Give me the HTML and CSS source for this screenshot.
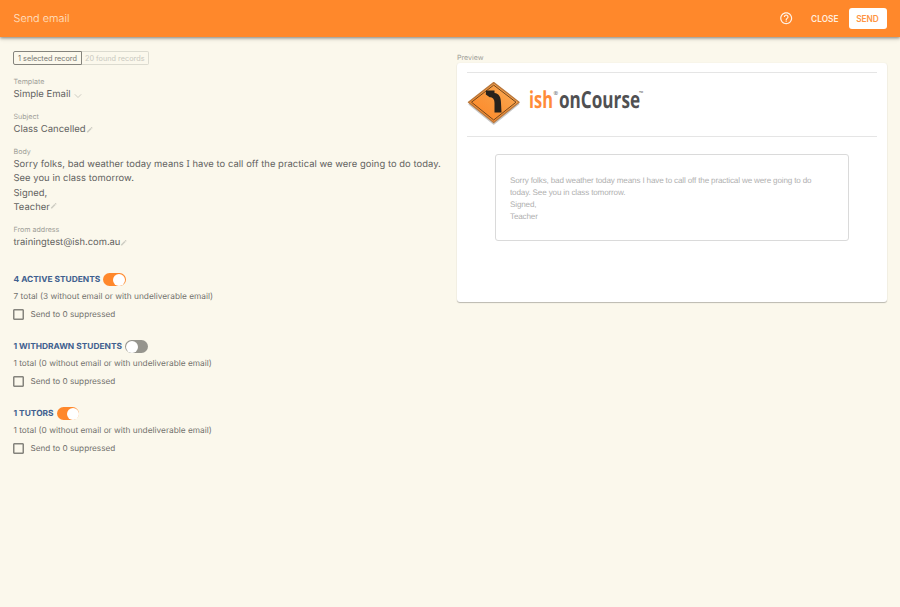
FILE: index.html
```html
<!DOCTYPE html>
<html lang="en">
<head>
<meta charset="utf-8">
<title>Send email</title>
<link rel="stylesheet" href="styles.css">
</head>
<body>
<header class="bar">
  <h1 class="bar-title"><span>Send email</span></h1>
  <svg class="help" viewBox="0 0 24 24"><path d="M11 18h2v-2h-2v2zm1-16C6.48 2 2 6.48 2 12s4.48 10 10 10 10-4.48 10-10S17.520 2 12 2zm0 18c-4.410 0-8-3.590-8-8s3.590-8 8-8 8 3.590 8 8-3.590 8-8 8zm0-14c-2.210 0-4 1.790-4 4h2c0-1.100.9-2 2-2s2 .9 2 2c0 2-3 1.750-3 5h2c0-2.250 3-2.500 3-5 0-2.210-1.790-4-4-4z"/></svg>
  <button class="btn close">CLOSE</button>
  <button class="btn send">SEND</button>
</header>
<main class="content">
  <section class="form">
    <div class="records">
      <button class="rec selected"><span>1 selected record</span></button>
      <button class="rec found"><span>20 found records</span></button>
    </div>
    <div class="field template">
      <div class="label">Template</div>
      <div class="value"><span>Simple Email</span><svg class="chevron" viewBox="0 0 8 6"><path d="M.8 1.300 4 4.500 7.200 1.300"/></svg></div>
    </div>
    <div class="field subject">
      <div class="label">Subject</div>
      <div class="value"><span>Class Cancelled</span><svg class="pencil" viewBox="0 0 24 24"><path d="M3 17.250V21h3.750L17.810 9.940l-3.750-3.750L3 17.250zM20.710 7.040a1 1 0 0 0 0-1.410l-2.340-2.340a1 1 0 0 0-1.410 0l-1.830 1.830 3.750 3.750 1.830-1.830z"/></svg></div>
    </div>
    <div class="field message">
      <div class="label">Body</div>
      <div class="value body-text">Sorry folks, bad weather today means <span class="serif-i">I</span> have to call off the practical we were going to do today.<br>See you in class tomorrow.<br>Signed,<br>Teacher<svg class="pencil" viewBox="0 0 24 24"><path d="M3 17.250V21h3.750L17.810 9.940l-3.750-3.750L3 17.250zM20.710 7.040a1 1 0 0 0 0-1.410l-2.340-2.340a1 1 0 0 0-1.410 0l-1.830 1.830 3.750 3.750 1.830-1.830z"/></svg></div>
    </div>
    <div class="field from">
      <div class="label">From address</div>
      <div class="value"><span>trainingtest@ish.com.au</span><svg class="pencil" viewBox="0 0 24 24"><path d="M3 17.250V21h3.750L17.810 9.940l-3.750-3.750L3 17.250zM20.710 7.040a1 1 0 0 0 0-1.410l-2.340-2.340a1 1 0 0 0-1.410 0l-1.830 1.830 3.750 3.750 1.830-1.830z"/></svg></div>
    </div>
    <div class="group">
      <div class="group-head"><h2>4 ACTIVE STUDENTS</h2><span class="switch on"></span></div>
      <p class="total">7 total (3 without email or with undeliverable email)</p>
      <label class="check"><span class="box"></span><span>Send to 0 suppressed</span></label>
    </div>
    <div class="group">
      <div class="group-head"><h2>1 WITHDRAWN STUDENTS</h2><span class="switch"></span></div>
      <p class="total">1 total (0 without email or with undeliverable email)</p>
      <label class="check"><span class="box"></span><span>Send to 0 suppressed</span></label>
    </div>
    <div class="group">
      <div class="group-head"><h2>1 TUTORS</h2><span class="switch on"></span></div>
      <p class="total">1 total (0 without email or with undeliverable email)</p>
      <label class="check"><span class="box"></span><span>Send to 0 suppressed</span></label>
    </div>
  </section>
  <section class="preview">
    <div class="label">Preview</div>
    <div class="card">
      <div class="brand">
        <svg class="logo" viewBox="0 0 180 46">
          <defs><linearGradient id="sign" x1="0" y1="1" x2="1" y2="0"><stop offset="0" stop-color="#ff8424"/><stop offset=".5" stop-color="#fa973b"/><stop offset="1" stop-color="#fbb05c"/></linearGradient></defs>
          <path d="M2 22.800 26.700 42.800 52 22.300" fill="none" stroke="#999" stroke-width="2" stroke-linejoin="round" opacity=".55"/>
          <path d="M26.700 1.600 52 21.200 26.700 41.500 1.500 21.200Z" fill="url(#sign)" stroke="#b9783d" stroke-width="1.400" stroke-linejoin="round"/>
          <path d="M26.700 4.100 49 21.200 26.700 39 4.500 21.200Z" fill="none" stroke="#70451d" stroke-width="1"/>
          <path d="M19 9.500H27.500V12C32 12.500 34 16 34 22L34.500 31.500H27.500V22C27.500 18 25.500 16.300 22.700 16.300L18.800 13.500Z" fill="#27221c"/>
          <g class="logo-type">
            <text x="62" y="27" textLength="24" lengthAdjust="spacingAndGlyphs" class="ish">ish</text>
            <text x="86.500" y="14" class="mark">®</text>
            <text x="92" y="27" textLength="81" lengthAdjust="spacingAndGlyphs" class="course">onCourse</text>
            <text x="172" y="14" class="mark">™</text>
          </g>
        </svg>
      </div>
      <div class="mail">Sorry folks, bad weather today means I have to call off the practical we were going to do<br>today. See you in class tomorrow.<br>Signed,<br>Teacher</div>
    </div>
  </section>
</main>
</body>
</html>
```
FILE: styles.css
```css
* { box-sizing: border-box; }
body {
  margin: 0;
  min-height: 607px;
  background: #fbf8ec;
  color: #62625f;
  font-family: Inter, "Liberation Sans", sans-serif;
  font-size: 10px;
  font-weight: 300;
  text-rendering: geometricPrecision;
}
h1, h2, p { margin: 0; }
button { font-family: inherit; padding: 0; border: 0; background: none; }
.bar {
  position: relative;
  display: flex;
  align-items: center;
  height: 37px;
  padding: 0 13.5px;
  background: #ff882b;
  box-shadow: 0 1px 3px rgba(0, 0, 0, .42), 0 2px 5px rgba(0, 0, 0, .1);
}
.bar-title { flex: 1; padding-bottom: 1px; color: #ffe5cd; font-size: 10.9px; font-weight: 300; }
.help { width: 14.4px; height: 14.4px; fill: #fff2e6; margin-right: 7.5px; }
.btn { height: 21px; font-size: 8.3px; font-weight: 600; border-radius: 3px; }
.close { width: 47.5px; color: #ffeddf; }
.send { width: 38px; background: #fff; color: #ff9443; }
.content { display: flex; padding: 14px 13.5px 0 13px; }
.form { width: 444px; flex: none; }
.records { display: flex; height: 14px; }
.rec { height: 14px; border: 1px solid #dcdbd0; color: #c9c8bf; font-size: 7.3px; font-weight: 400; white-space: nowrap; }
.selected { width: 69px; border-color: #85847d; border-radius: 2px 0 0 2px; color: #777771; }
.found { width: 66.5px; border-left: 0; border-radius: 0 2px 2px 0; }
.field, h2, .total { margin-left: .5px; }
.label { height: 9px; line-height: 9px; font-size: 7.1px; font-weight: 400; color: #a09f98; }
.value { display: flex; align-items: center; height: 14px; line-height: 14.1px; margin-top: 2px; font-size: 9.5px; font-weight: 400; white-space: nowrap; }
.template { margin-top: 12px; }
.subject { margin-top: 10px; }
.message { margin-top: 10px; }
.body-text { display: block; height: 57px; font-size: 9.4px; line-height: 14.25px; letter-spacing: .055px; }
.serif-i { font-family: "Noto Sans", sans-serif; line-height: 1; }
.from { margin-top: 10px; }
.from .value { font-size: 9.4px; }
.chevron { width: 8px; height: 6px; margin: 1px 0 0 3px; fill: none; stroke: #cccbc1; stroke-width: 1; }
.pencil { width: 7.5px; height: 7.5px; fill: #cecdc3; }
.group { height: 67px; }
.from + .group { margin-top: 22px; }
.group-head { display: flex; align-items: center; height: 15px; }
h2 { padding-top: 1px; color: #3f608f; font-size: 8.4px; font-weight: 700; }
.switch { width: 22.5px; height: 13px; margin-left: 3px; padding: .5px; border-radius: 7px; background: #96958e; }
.switch::before { content: ""; display: block; width: 12px; height: 12px; border-radius: 50%; background: #fff; }
.switch.on { background: #ff882b; }
.switch.on::before { margin-left: 9.5px; }
.total { height: 12px; margin-top: 4px; line-height: 12px; font-size: 8.3px; font-weight: 400; color: #72716c; }
.check { display: flex; align-items: center; height: 12px; margin-top: 5px; font-size: 8.2px; font-weight: 400; color: #72716c; }
.box { width: 11px; height: 11px; margin-right: 6.5px; border: 1px solid #85847d; box-shadow: inset 0 0 0 .5px #85847d; border-radius: 1px; }
.preview { width: 429.5px; flex: none; padding-top: 2px; }
.card { height: 239px; margin-top: 1px; padding: 9px 9.5px; background: #fff; border-radius: 3px; box-shadow: 0 1px 1px rgba(0, 0, 0, .25), 0 0 2px rgba(0, 0, 0, .06); }
.brand { height: 65px; border-top: 1px solid #e5e5e5; border-bottom: 1px solid #e5e5e5; padding-top: 8px; }
.logo { display: block; width: 180px; height: 46px; overflow: visible; }
.logo-type { font-family: "Open Sans", "Liberation Sans", sans-serif; font-weight: 700; font-size: 23.5px; }
.ish { fill: #ff8b38; }
.course { fill: #505052; }
.mark { fill: #777; font-size: 5.5px; }
.mail { width: 354px; height: 87px; margin: 17px 0 0 28.5px; padding: 19.5px 14px; border: 1.5px solid #dadada; border-radius: 3px; color: #b0b0b0; font: 300 8.1px/12.3px "Liberation Sans", Arial, sans-serif; letter-spacing: -.155px; white-space: nowrap; }
```
